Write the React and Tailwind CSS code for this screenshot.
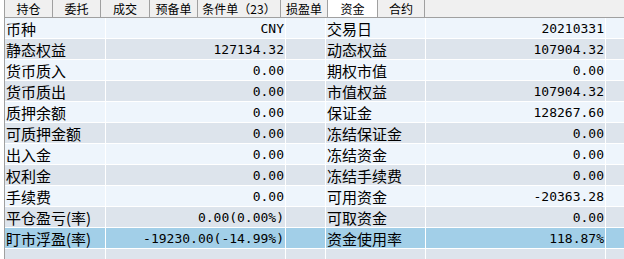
import React from 'react';

const tabs = [
  { name: '持仓', w: 'w-[48px]' },
  { name: '委托', w: 'w-[48px]' },
  { name: '成交', w: 'w-[49px]' },
  { name: '预备单', w: 'w-[48px]' },
  { name: '条件单（23）', w: 'w-[83px]' },
  { name: '损盈单', w: 'w-[47px]' },
  { name: '资金', w: 'w-[50px]', active: true },
  { name: '合约', w: 'w-[47px]' },
];

const rows = [
  ['币种', 'CNY', '交易日', '20210331'],
  ['静态权益', '127134.32', '动态权益', '107904.32'],
  ['货币质入', '0.00', '期权市值', '0.00'],
  ['货币质出', '0.00', '市值权益', '107904.32'],
  ['质押余额', '0.00', '保证金', '128267.60'],
  ['可质押金额', '0.00', '冻结保证金', '0.00'],
  ['出入金', '0.00', '冻结资金', '0.00'],
  ['权利金', '0.00', '冻结手续费', '0.00'],
  ['手续费', '0.00', '可用资金', '-20363.28'],
  ['平仓盈亏(率)', '0.00(0.00%)', '可取资金', '0.00'],
  ['盯市浮盈(率)', '-19230.00(-14.99%)', '资金使用率', '118.87%'],
  ['', '', '', ''],
];

const label = "font-['Noto_Sans_CJK_SC',sans-serif] text-[15px] leading-none pl-[1px]";
const num = "font-['DejaVu_Sans_Mono',monospace] text-[13px] leading-none text-right pr-[1px]";

const Row = ({ r, i }) => {
  const bg = i === 10 ? 'bg-[#a2cfe8]' : i % 2 === 1 ? 'bg-[#dde4ec]' : 'bg-[#eef5fc]';
  return (
    <div className={`flex h-[21px] border-b border-white text-black ${bg}`}>
      <div className={`w-[101px] border-r border-white flex items-center whitespace-nowrap ${label}`}>{r[0]}</div>
      <div className={`w-[180px] border-r border-white flex items-center justify-end whitespace-nowrap ${num}`}>{r[1]}</div>
      <div className="w-[40px] border-r border-white" />
      <div className={`w-[100px] border-r border-white flex items-center whitespace-nowrap ${label}`}>{r[2]}</div>
      <div className={`w-[180px] border-r border-white flex items-center justify-end whitespace-nowrap ${num}`}>{r[3]}</div>
      <div className="flex-1" />
    </div>
  );
};

const App = () => {
  return (
    <div className="w-[624px] h-[259px] bg-white overflow-hidden">
      <div className="ml-[4px] border-l border-[#a0a0a0] h-[259px]">
        <div className="flex h-[18px] bg-[#f0f0f0] border-b border-[#a0a0a0]">
          {tabs.map((t) => (
            <div
              key={t.name}
              className={`${t.w} border-r border-[#a0a0a0] flex items-center justify-center font-['Noto_Sans_CJK_SC',sans-serif] text-[12px] leading-none text-black ${t.active ? 'bg-white' : ''}`}
            >
              {t.name}
            </div>
          ))}
        </div>
        <div>
          {rows.map((r, i) => (
            <Row key={i} r={r} i={i} />
          ))}
        </div>
      </div>
    </div>
  );
};

export default App;
